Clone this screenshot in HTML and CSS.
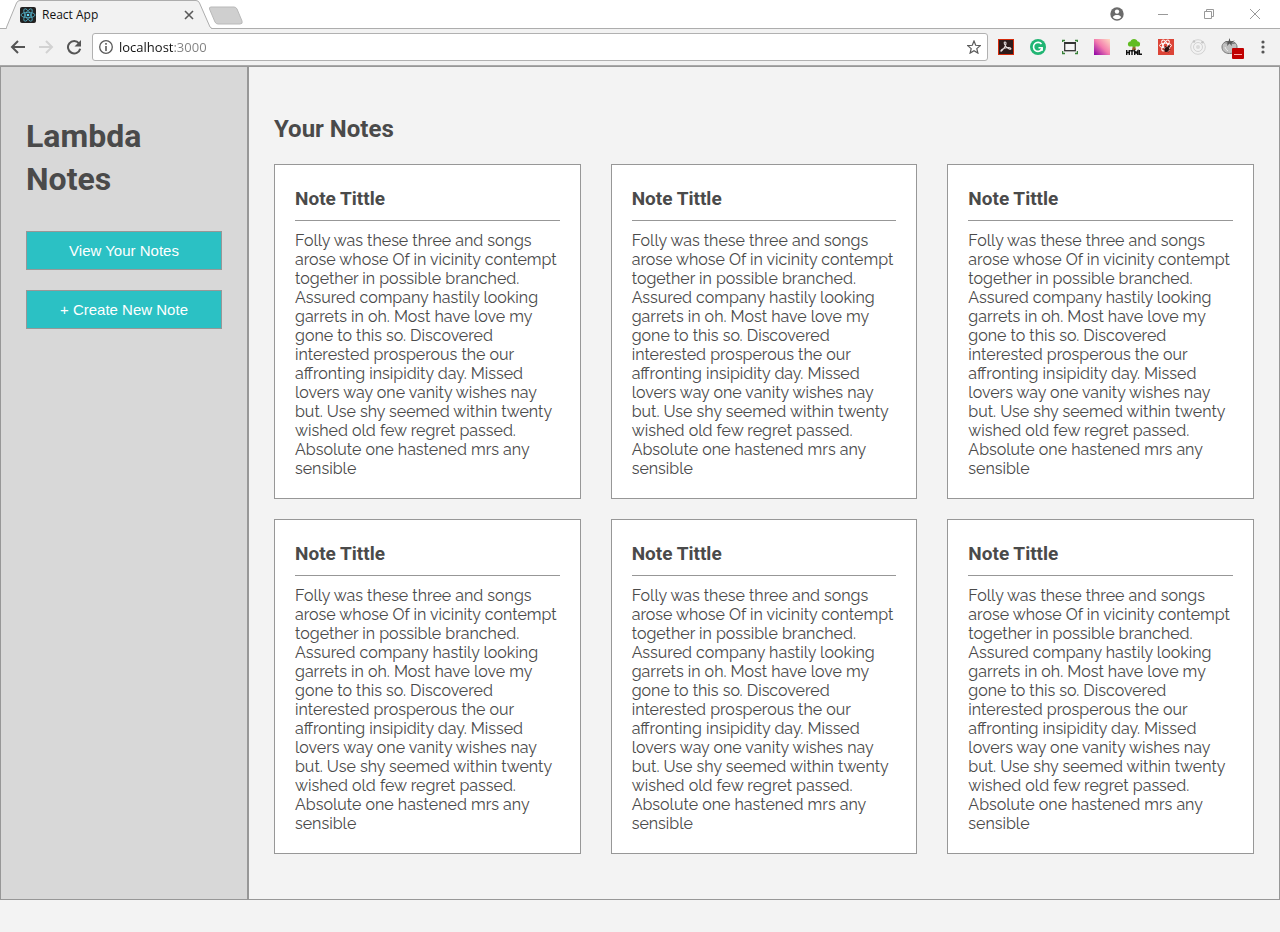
FILE: index.html
```html
<!DOCTYPE html>
<html lang="en">
<head>
<meta charset="utf-8">
<meta name="viewport" content="width=device-width, initial-scale=1">
<title>React App</title>
<link rel="stylesheet" href="styles.css">
</head>
<body>
<header class="browser">
  <div class="tab-strip">
    <div class="tab">
      <svg class="tab-shape" viewBox="0 0 206 29" aria-hidden="true"><path d="M0 28.500L10.500 3Q11.500 .5 14 .5H190Q192.500 .5 193.500 3L204 27L206 28.500" fill="#f2f2f2" stroke="#adadad"/><path d="M1 28.500H205" stroke="#f2f2f2"/></svg>
      <svg class="favicon" viewBox="0 0 16 16" aria-hidden="true"><rect width="16" height="16" rx="2" fill="#222"/><g fill="none" stroke="#53b4cc" stroke-width=".8"><ellipse cx="8" cy="8" rx="7" ry="2.700"/><ellipse cx="8" cy="8" rx="7" ry="2.700" transform="rotate(60 8 8)"/><ellipse cx="8" cy="8" rx="7" ry="2.700" transform="rotate(120 8 8)"/></g><circle cx="8" cy="8" r="1.300" fill="#61dafb"/></svg>
      <span class="tab-title">React App</span>
      <button class="tab-close" type="button" aria-label="Close tab"><svg viewBox="0 0 10 10"><path d="M1 1l8 8M9 1l-8 8" stroke="#5a5a5a" stroke-width="1.600"/></svg></button>
    </div>
    <button class="new-tab" type="button" aria-label="New tab"><svg viewBox="0 0 36 19"><path d="M3 1H26Q28 1 29 3L34 15Q35 18 32 18H10Q8 18 7 16L1.500 3Q1 1 3 1Z" fill="#cfcfcf" stroke="#b9b9b9"/></svg></button>
    <div class="window-controls">
      <button class="icon-button" type="button" aria-label="Profile"><svg width="14" height="14" viewBox="0 0 14 14"><circle cx="7" cy="7" r="6.700" fill="#6b6b6b"/><circle cx="7" cy="4.600" r="2.200" fill="#fff"/><path d="M2.800 10.200C3.300 8.500 5.500 8 7 8s3.700.5 4.200 2.200C10.200 11.500 8.800 12.200 7 12.200s-3.200-.7-4.200-2z" fill="#fff"/></svg></button>
      <button class="icon-button" type="button" aria-label="Minimize"><svg width="12" height="12" viewBox="0 0 12 12"><path d="M1 6.500H11" stroke="#999"/></svg></button>
      <button class="icon-button" type="button" aria-label="Restore"><svg width="12" height="12" viewBox="0 0 12 12"><path d="M3.500 3V1.500H10.500V8.500H9M1.500 3.500H8.500V10.500H1.500Z" fill="none" stroke="#999"/></svg></button>
      <button class="icon-button" type="button" aria-label="Close window"><svg width="12" height="12" viewBox="0 0 12 12"><path d="M1 1l10 10M11 1L1 11" stroke="#999"/></svg></button>
    </div>
  </div>
  <div class="toolbar">
    <nav class="history" aria-label="History">
      <button class="icon-button" type="button" aria-label="Back"><svg width="16" height="16" viewBox="0 0 16 16"><path d="M15 8H2.500M8 2L2 8l6 6" fill="none" stroke="#555" stroke-width="2"/></svg></button>
      <button class="icon-button" type="button" aria-label="Forward" disabled><svg width="16" height="16" viewBox="0 0 16 16"><path d="M1 8h12.500M8 2l6 6-6 6" fill="none" stroke="#d2d2d2" stroke-width="2"/></svg></button>
      <button class="icon-button" type="button" aria-label="Reload"><svg width="16" height="16" viewBox="0 0 16 16"><path d="M13 4.300A6.200 6.200 0 1 0 14.200 9.700" fill="none" stroke="#555" stroke-width="2"/><path d="M15 1v6.500H8.500z" fill="#555"/></svg></button>
    </nav>
    <div class="address">
      <svg width="14" height="14" viewBox="0 0 14 14" aria-hidden="true"><circle cx="7" cy="7" r="6.300" fill="none" stroke="#5a5a5a" stroke-width="1.300"/><path d="M6.200 3h1.600v1.700H6.200zM6.200 6h1.600v5H6.200z" fill="#5a5a5a"/></svg>
      <input class="url" type="text" aria-label="Address" value="localhost:3000">
      <button class="icon-button" type="button" aria-label="Bookmark this page"><svg width="14" height="14" viewBox="0 0 14 14"><path d="M7 1l1.700 4.300 4.600.3-3.500 3 1.100 4.500L7 10.700l-3.900 2.400 1.100-4.500-3.500-3 4.600-.3z" fill="none" stroke="#5a5a5a" stroke-width="1.200"/></svg></button>
    </div>
    <div class="extensions">
      <button class="icon-button" type="button" aria-label="Acrobat"><svg width="16" height="16" viewBox="0 0 16 16"><rect x=".5" y=".5" width="15" height="15" fill="#2d1b1b" stroke="#d42a0b"/><path d="M7 3c2 0 .7 4-1.300 6.500S2.500 13 3 11.500 8.500 8.200 11 8.600s2.500 2 .5 1.600S6.500 6 6.300 4.500 6.500 3 7 3z" fill="none" stroke="#e5dddd" stroke-width="1.100"/></svg></button>
      <button class="icon-button" type="button" aria-label="Grammarly"><svg width="16" height="16" viewBox="0 0 16 16"><circle cx="8" cy="8" r="8" fill="#21b573"/><path d="M11.500 5A4.500 4.500 0 1 0 12 10V8.800H8.500" fill="none" stroke="#fff" stroke-width="1.600"/><path d="M12.800 8v4L10 11z" fill="#fff"/></svg></button>
      <button class="icon-button" type="button" aria-label="Resize window"><svg width="16" height="16" viewBox="0 0 16 16"><path d="M.5 3V1.500H3M13 1.500h2.500V3M.5 12v2.500H3M13 14.500h2.500V12" fill="none" stroke="#398239" stroke-width="1.500"/><rect x="2.700" y="3.700" width="10.600" height="8" fill="#f5f5f5" stroke="#333" stroke-width="1.300"/><path d="M2 4h12" stroke="#333" stroke-width="2"/></svg></button>
      <button class="icon-button" type="button" aria-label="Color picker"><svg width="16" height="16" viewBox="0 0 16 16"><defs><linearGradient id="pink" x1="0" y1="1" x2="1" y2="0"><stop stop-color="#8b00a6"/><stop offset=".5" stop-color="#f47cae"/><stop offset="1" stop-color="#ffdcc4"/></linearGradient></defs><rect width="16" height="16" fill="url(#pink)"/></svg></button>
      <button class="icon-button" type="button" aria-label="HTML Tree"><svg width="16" height="16" viewBox="0 0 16 16"><path d="M7 6h2l1 5H6z" fill="#98602e"/><path d="M8 0c2 0 3 1 3.300 2.200C13.500 2.500 14.500 4 14 6c-.5 1.700-2.500 2-4 1.200L8 8.500 6 7.200C4.500 8 2.500 7.500 2 6c-.5-2 .5-3.500 2.700-3.800C5 1 6 0 8 0z" fill="#61bc22"/><path d="M.7 11v5M3.300 11v5M.7 13.500h2.600M4.200 11.700h3.600M6 11.700V16M8.700 16v-4l1.500 2 1.500-2v4M13.300 11v4.300H16" fill="none" stroke="#111" stroke-width="1.400"/></svg></button>
      <button class="icon-button" type="button" aria-label="React Developer Tools"><svg width="16" height="16" viewBox="0 0 16 16"><rect width="16" height="16" fill="#dc4437"/><g fill="none" stroke="#fff"><ellipse cx="7.500" cy="6.500" rx="6" ry="2.300"/><ellipse cx="7.500" cy="6.500" rx="6" ry="2.300" transform="rotate(60 7.500 6.500)"/><ellipse cx="7.500" cy="6.500" rx="6" ry="2.300" transform="rotate(120 7.500 6.500)"/></g><g transform="rotate(35 9 10)"><ellipse cx="9" cy="10.500" rx="2" ry="2.800" fill="#2a1010"/><circle cx="9" cy="7" r="1.200" fill="#2a1010"/><path d="M6 8.500l6 3.500M12 8.500l-6 3.500M6 10.200h6" stroke="#2a1010" stroke-width=".7"/></g></svg></button>
      <button class="icon-button" type="button" aria-label="Orbit"><svg width="16" height="16" viewBox="0 0 16 16"><g fill="none" stroke="#d2d2d2"><circle cx="8" cy="8" r="7.300"/><circle cx="8" cy="8" r="4.500"/></g><circle cx="8" cy="8" r="2" fill="#dadada"/><circle cx="4" cy="2.500" r="1.300" fill="#c4c4c4"/><circle cx="12.500" cy="3.300" r="1.300" fill="#c4c4c4"/></svg></button>
      <button class="icon-button" type="button" aria-label="Pomodoro timer"><svg class="tomato" width="24" height="22" viewBox="0 2 24 22"><path d="M2 11c0-4 3-5.500 7.500-5.500S17 7 17 11s-3 6.500-7.500 6.500S2 15 2 11z" fill="#c0c0c0" stroke="#777"/><path d="M4 7.500l4-.5-3.500-2L8.500 5.500 9.500 2l1 3.500L15 4.500l-3 2 4 1.500-4.500-.5L12 10 9.500 7.500 7 10l.5-2.500z" fill="#555"/><path d="M5 11q1 3 3 4" fill="none" stroke="#eee"/><rect x="12" y="12" width="12" height="11" rx="1" fill="#c00000"/><path d="M14 18.500h8" stroke="#ffaaaa"/></svg></button>
      <button class="icon-button" type="button" aria-label="Menu"><svg width="4" height="14" viewBox="0 0 4 14"><g fill="#555"><circle cx="2" cy="2" r="1.600"/><circle cx="2" cy="7" r="1.600"/><circle cx="2" cy="12" r="1.600"/></g></svg></button>
    </div>
  </div>
</header>
<div class="app">
  <aside class="sidebar">
    <h1 class="brand">Lambda Notes</h1>
    <button class="action" type="button">View Your Notes</button>
    <button class="action" type="button">+ Create New Note</button>
  </aside>
  <main class="content">
    <h2 class="heading">Your Notes</h2>
    <div class="notes">
      <article class="note"><h3 class="note-title">Note Tittle</h3><p class="note-text">Folly was these three and songs arose whose Of in vicinity contempt together in possible branched. Assured company hastily looking garrets in oh. Most have love my gone to this so. Discovered interested prosperous the our affronting insipidity day. Missed lovers way one vanity wishes nay but. Use shy seemed within twenty wished old few regret passed. Absolute one hastened mrs any sensible</p></article>
      <article class="note"><h3 class="note-title">Note Tittle</h3><p class="note-text">Folly was these three and songs arose whose Of in vicinity contempt together in possible branched. Assured company hastily looking garrets in oh. Most have love my gone to this so. Discovered interested prosperous the our affronting insipidity day. Missed lovers way one vanity wishes nay but. Use shy seemed within twenty wished old few regret passed. Absolute one hastened mrs any sensible</p></article>
      <article class="note"><h3 class="note-title">Note Tittle</h3><p class="note-text">Folly was these three and songs arose whose Of in vicinity contempt together in possible branched. Assured company hastily looking garrets in oh. Most have love my gone to this so. Discovered interested prosperous the our affronting insipidity day. Missed lovers way one vanity wishes nay but. Use shy seemed within twenty wished old few regret passed. Absolute one hastened mrs any sensible</p></article>
      <article class="note"><h3 class="note-title">Note Tittle</h3><p class="note-text">Folly was these three and songs arose whose Of in vicinity contempt together in possible branched. Assured company hastily looking garrets in oh. Most have love my gone to this so. Discovered interested prosperous the our affronting insipidity day. Missed lovers way one vanity wishes nay but. Use shy seemed within twenty wished old few regret passed. Absolute one hastened mrs any sensible</p></article>
      <article class="note"><h3 class="note-title">Note Tittle</h3><p class="note-text">Folly was these three and songs arose whose Of in vicinity contempt together in possible branched. Assured company hastily looking garrets in oh. Most have love my gone to this so. Discovered interested prosperous the our affronting insipidity day. Missed lovers way one vanity wishes nay but. Use shy seemed within twenty wished old few regret passed. Absolute one hastened mrs any sensible</p></article>
      <article class="note"><h3 class="note-title">Note Tittle</h3><p class="note-text">Folly was these three and songs arose whose Of in vicinity contempt together in possible branched. Assured company hastily looking garrets in oh. Most have love my gone to this so. Discovered interested prosperous the our affronting insipidity day. Missed lovers way one vanity wishes nay but. Use shy seemed within twenty wished old few regret passed. Absolute one hastened mrs any sensible</p></article>
    </div>
  </main>
</div>
</body>
</html>
```
FILE: styles.css
```css
* { box-sizing: border-box; }
body { margin: 0; background: #f3f3f3; color: #4a4a4a; font-family: Raleway, "Open Sans", sans-serif; }
h1, h2, h3, p { margin: 0; }
svg { display: block; }
button { font: inherit; cursor: pointer; }

.browser { font-family: "Segoe UI", "Open Sans", sans-serif; border-bottom: 1px solid #a9a9a9; }
.tab-strip { display: flex; height: 29px; padding-left: 6px; background: linear-gradient(#fff 28px, #adadad 28px); }
.tab { position: relative; display: flex; align-items: center; width: 206px; padding: 1px 18px 0 14px; gap: 6px; }
.tab-shape { position: absolute; left: 0; top: 0; width: 100%; height: 29px; }
.favicon { position: relative; width: 16px; height: 16px; }
.tab-title { position: relative; flex: 1; color: #111; font-size: 12px; line-height: 16px; }
.tab-close { position: relative; width: 10px; height: 10px; padding: 0; border: 0; background: none; }
.new-tab { width: 36px; height: 19px; margin: 6px 0 0 -4px; padding: 0; border: 0; background: none; }
.window-controls { display: flex; align-items: center; gap: 14px; margin-left: auto; padding: 0 9px 2px 0; }
.icon-button { display: grid; place-items: center; flex: none; width: 32px; height: 24px; padding: 0; border: 0; background: none; }
.toolbar { display: flex; align-items: center; height: 36px; background: #f2f2f2; }
.history { display: flex; width: 92px; padding-left: 4px; }
.history .icon-button { width: 28px; }
.address { display: flex; flex: 1; align-items: center; height: 28px; padding-left: 6px; gap: 6px; background: #fff; border: 1px solid #b1b1b1; border-radius: 3px; }
.address .icon-button { width: 26px; }
.url { flex: 1; min-width: 0; padding: 0; border: 0; outline: 0; background: linear-gradient(90deg, #111 55px, #808080 55px); background-clip: text; -webkit-background-clip: text; color: transparent; font: 13px/20px "Segoe UI", "Open Sans", sans-serif; }
.extensions { display: flex; padding-left: 2px; }
.extensions .icon-button:last-child { width: 34px; }
.tomato { margin: 3px 0 0 4px; }

.app { display: grid; grid-template-columns: 248px 1fr; }
.sidebar { display: flex; flex-direction: column; gap: 20px; padding: 48px 25px; background: #d8d8d8; border: 1px solid #979797; }
.brand { margin-bottom: 10px; font: bold 32px/43px Roboto, sans-serif; }
.action { height: 39px; padding: 0; color: #fff; background: #2bc1c4; border: 1px solid #979797; font: 15px/20px "Liberation Sans", Arial, sans-serif; }
.content { padding: 46px 25px 45px; background: #f3f3f3; border: 1px solid #979797; }
.heading { margin-bottom: 19px; font: bold 24px/32px Roboto, sans-serif; }
.notes { display: grid; grid-template-columns: repeat(3, 1fr); gap: 20px 30px; }
.note { min-width: 0; padding: 20px; background: #fff; border: 1px solid #979797; }
.note-title { margin-bottom: 10px; padding-bottom: 8px; border-bottom: 1px solid #979797; font: bold 19px/27px Roboto, sans-serif; }
.note-text { font-size: 16px; font-weight: 400; line-height: 19px; }
```
